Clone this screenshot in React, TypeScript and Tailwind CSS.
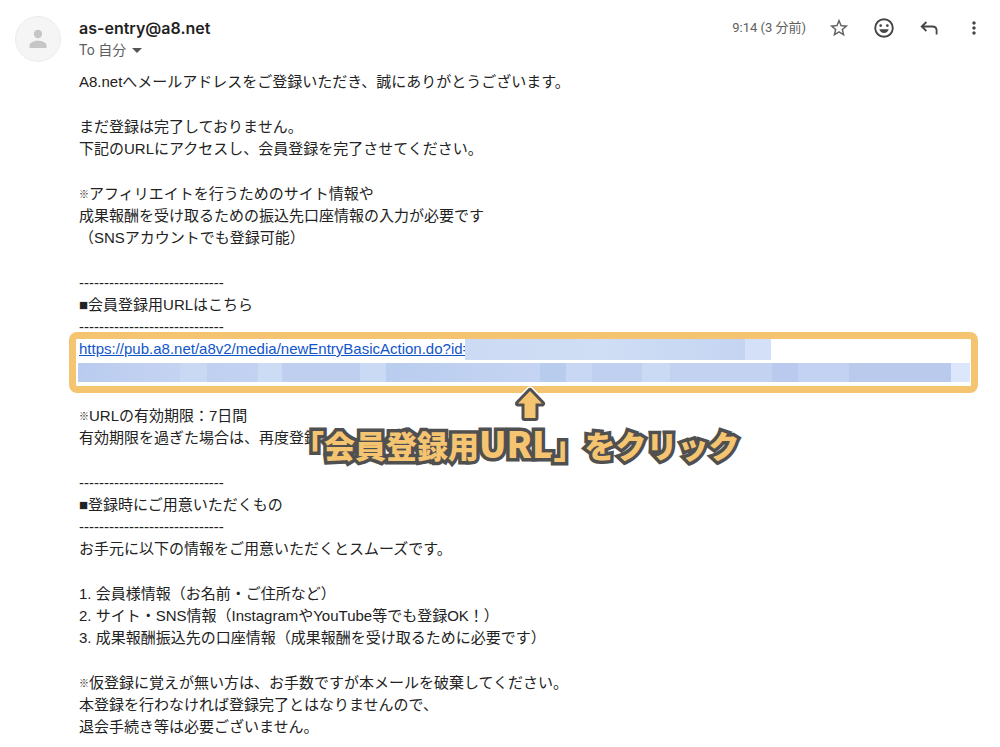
import type { ReactNode } from "react";
import { MdMoreVert, MdStarBorder } from "react-icons/md";

const RULE = "-----------------------------";

function Line({ text }: { text: string }) {
  if (text.startsWith("※")) {
    return (
      <span className="block">
        <span className="align-[1px] text-[10px] leading-none">※</span>
        {text.slice(1)}
      </span>
    );
  }
  return <span className="block">{text}</span>;
}

function Paragraph({ lines }: { lines: string[] }) {
  return (
    <p>
      {lines.map((line, i) => (
        <Line key={i} text={line} />
      ))}
    </p>
  );
}

function IconButton({ label, children }: { label: string; children: ReactNode }) {
  return (
    <button type="button" aria-label={label} className="flex size-6 items-center justify-center text-[#444746]">
      {children}
    </button>
  );
}

function Avatar() {
  return (
    <div className="flex size-[46px] shrink-0 items-center justify-center rounded-full border border-[#ececec] bg-[#f5f5f5]">
      <svg viewBox="0 0 18 20" className="h-5 w-[18px] fill-[#c6c6c6]" aria-hidden="true">
        <circle cx="9" cy="5" r="4.2" />
        <path d="M0.5 19v-2.2C0.5 13.600 5 11.800 9 11.800s8.500 1.800 8.500 5V19z" />
      </svg>
    </div>
  );
}

function Smile() {
  return (
    <svg viewBox="0 0 20 20" className="size-5" aria-hidden="true">
      <circle cx="10" cy="10" r="8.8" fill="none" stroke="currentColor" strokeWidth="1.9" />
      <circle cx="6.700" cy="7.600" r="1.350" fill="currentColor" />
      <circle cx="13.300" cy="7.600" r="1.350" fill="currentColor" />
      <path d="M5.300 11.300h9.400c-.6 2.400-2.500 3.800-4.700 3.800s-4.100-1.400-4.700-3.800z" fill="currentColor" />
    </svg>
  );
}

function Reply() {
  return (
    <svg viewBox="0 0 18 14" className="h-[14px] w-[18px]" fill="none" stroke="currentColor" strokeWidth="1.8" aria-hidden="true">
      <path d="M6.400 1 1.700 5.500l4.700 4.500M1.900 5.500h10.400c2.600 0 4.300 1.600 4.300 4.100v3.900" />
    </svg>
  );
}

function Callout() {
  return (
    <div className="pointer-events-none absolute top-12 left-[214px] flex w-max flex-col items-start">
      <svg viewBox="0 0 36 38" className="ml-[219px] h-[38px] w-9" aria-hidden="true">
        <path d="M18 5 30 17.500h-6.500V32h-11V17.500H6z" fill="none" stroke="#fff" strokeWidth="9" strokeLinejoin="round" />
        <path d="M18 5 30 17.500h-6.500V32h-11V17.500H6z" fill="#f5c470" stroke="#505050" strokeWidth="6" strokeLinejoin="round" className="[paint-order:stroke]" />
      </svg>
      <p className="font-['Noto_Sans_CJK_JP',sans-serif] text-[31px] leading-[42px] font-black whitespace-nowrap text-[#f5c470] [-webkit-text-stroke:7px_#505050] [paint-order:stroke] [stroke-linejoin:round]">
        「会員登録用<span className="text-4xl leading-none">URL</span>」をクリック
      </p>
    </div>
  );
}

function RegistrationLink() {
  return (
    <div className="relative">
      <div className="flex h-[22px]">
        <a href="#register" className="shrink-0 whitespace-nowrap text-[#1155cc] underline">
          https://pub.a8.net/a8v2/media/newEntryBasicAction.do?id=
        </a>
        <span className="relative -ml-1.5 w-[280px] bg-linear-to-r from-[#ccdaf3] via-[#cfdef5] to-[#c5d4f1]" />
        <span className="w-[26px] bg-[#d3e0f7]" />
      </div>
      <div className="-ml-px flex h-[22px] pt-[3px]">
        <span className="w-[102px] bg-linear-to-r from-[#b9ccef] to-[#c5d3f2]" />
        <span className="w-[27px] bg-[#c9d9f4]" />
        <span className="w-[51px] bg-linear-to-r from-[#bfd0f0] to-[#c4d2f2]" />
        <span className="w-[24px] bg-[#cddcf5]" />
        <span className="w-[78px] bg-[#bfcff0]" />
        <span className="w-[26px] bg-[#cbdaf4]" />
        <span className="w-[154px] bg-linear-to-r from-[#b9cdef] to-[#c5d4f2]" />
        <span className="w-[26px] bg-[#b8ccee]" />
        <span className="w-[26px] bg-[#c8d7f4]" />
        <span className="w-[50px] bg-[#c0d0f1]" />
        <span className="w-[28px] bg-[#cbdaf4]" />
        <span className="w-[102px] bg-[#c3d2f1]" />
        <span className="w-[26px] bg-[#b9caee]" />
        <span className="w-[51px] bg-[#c3d2f2]" />
        <span className="w-[102px] bg-[#b9caed]" />
        <span className="flex-1 bg-[#dde7fb]" />
      </div>
      <div className="pointer-events-none absolute -top-1.5 -right-2 -bottom-[11px] -left-2.5 rounded-lg border-[7px] border-[#f5c470]" />
      <Callout />
    </div>
  );
}

export default function App() {
  return (
    <main className="flex min-h-screen gap-[18px] bg-white pt-4 pr-[30px] pl-[15px] font-['Liberation_Sans','Noto_Sans_CJK_JP',sans-serif] text-[#222]">
      <Avatar />
      <div className="min-w-0 flex-1">
        <header className="-mr-4 flex justify-between">
          <div>
            <h1 className="font-[Inter,sans-serif] text-base leading-6 font-semibold text-[#1f1f1f]">as-entry@a8.net</h1>
            <button type="button" className="flex items-center gap-1.5 font-[Roboto,'Noto_Sans_CJK_JP',sans-serif] text-sm leading-5 text-[#5e5e5e]">
              To 自分
              <svg viewBox="0 0 10 5" className="h-[5px] w-2.5 fill-[#555]" aria-hidden="true">
                <path d="M0 0h10L5 5z" />
              </svg>
            </button>
          </div>
          <div className="flex h-6 items-center gap-[21px]">
            <time className="font-[Roboto,'Noto_Sans_CJK_JP',sans-serif] text-[13px] text-[#5e5e5e]">9:14 (3 分前)</time>
            <IconButton label="スターを付ける">
              <MdStarBorder className="size-[22px] text-[#5f6061]" />
            </IconButton>
            <IconButton label="リアクションを追加">
              <Smile />
            </IconButton>
            <IconButton label="返信">
              <Reply />
            </IconButton>
            <IconButton label="その他">
              <MdMoreVert className="size-5" />
            </IconButton>
          </div>
        </header>
        <article className="mt-[11px] flex flex-col gap-[23px] text-[15px] leading-[22px]">
          <Paragraph lines={["A8.netへメールアドレスをご登録いただき、誠にありがとうございます。"]} />
          <Paragraph
            lines={["まだ登録は完了しておりません。", "下記のURLにアクセスし、会員登録を完了させてください。"]}
          />
          <Paragraph
            lines={[
              "※アフィリエイトを行うためのサイト情報や",
              "成果報酬を受け取るための振込先口座情報の入力が必要です",
              "（SNSアカウントでも登録可能）",
            ]}
          />
          <section>
            <Paragraph lines={[RULE, "■会員登録用URLはこちら", RULE]} />
            <RegistrationLink />
          </section>
          <Paragraph lines={["※URLの有効期限：7日間", "有効期限を過ぎた場合は、再度登録"]} />
          <Paragraph
            lines={[RULE, "■登録時にご用意いただくもの", RULE, "お手元に以下の情報をご用意いただくとスムーズです。"]}
          />
          <Paragraph
            lines={[
              "1. 会員様情報（お名前・ご住所など）",
              "2. サイト・SNS情報（InstagramやYouTube等でも登録OK！）",
              "3. 成果報酬振込先の口座情報（成果報酬を受け取るために必要です）",
            ]}
          />
          <Paragraph
            lines={[
              "※仮登録に覚えが無い方は、お手数ですが本メールを破棄してください。",
              "本登録を行わなければ登録完了とはなりませんので、",
              "退会手続き等は必要ございません。",
            ]}
          />
        </article>
      </div>
    </main>
  );
}
